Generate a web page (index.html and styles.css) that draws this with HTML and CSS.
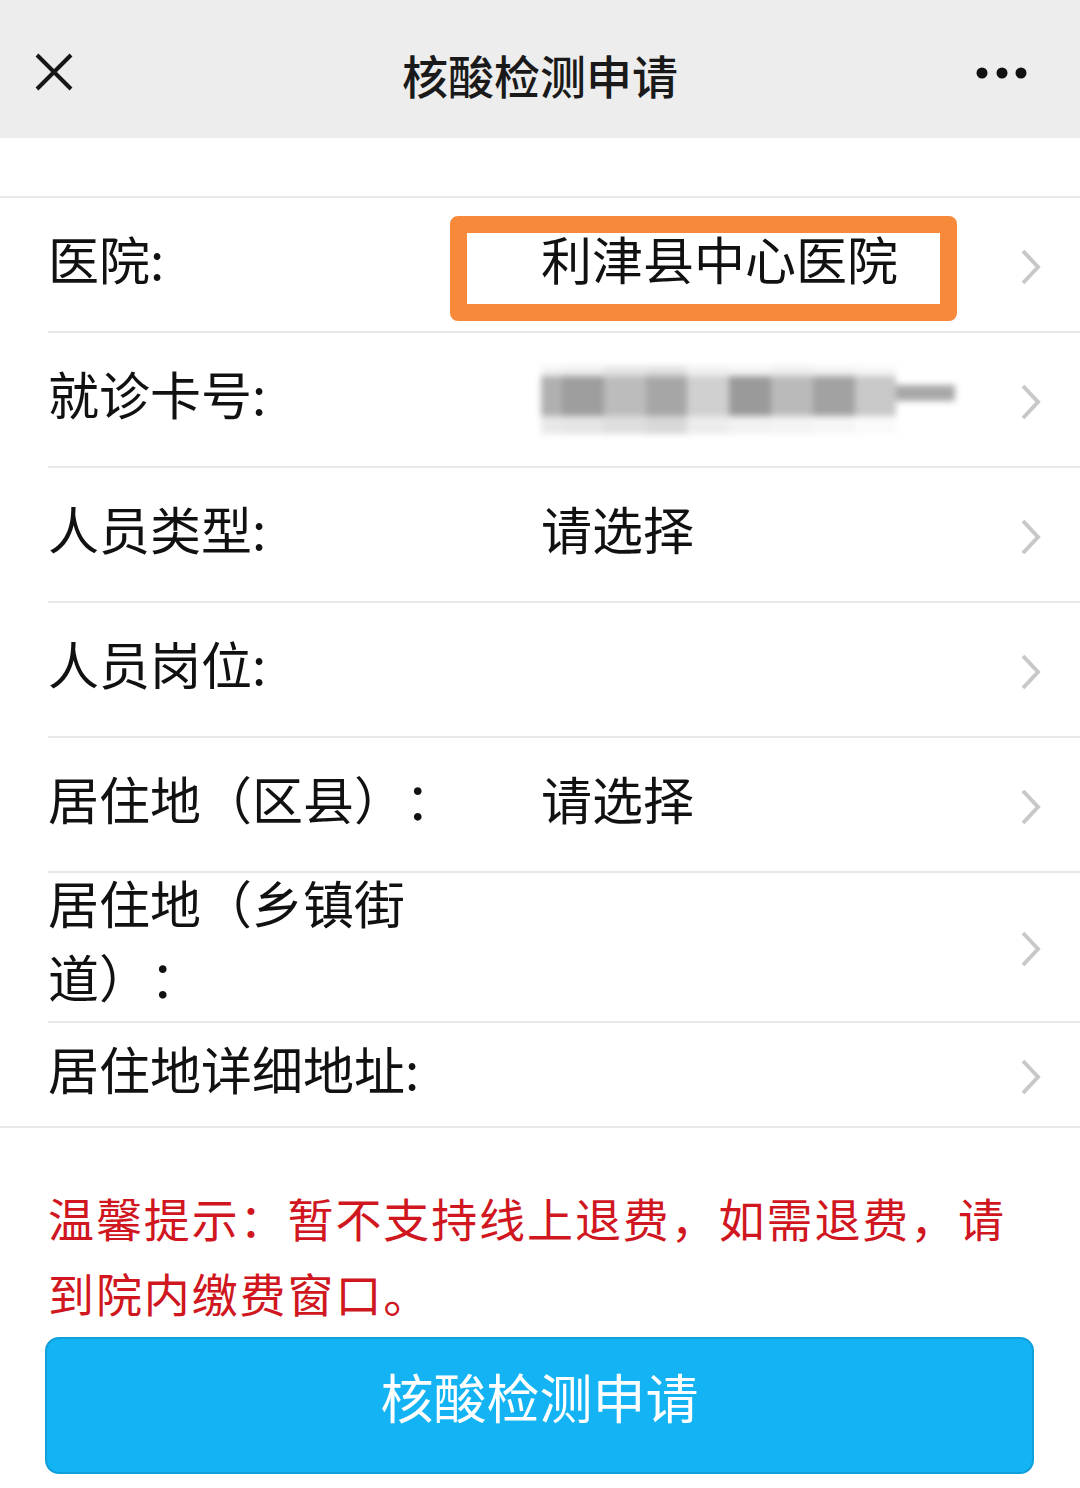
FILE: index.html
```html
<!DOCTYPE html>
<html lang="zh-CN">
<head>
<meta charset="utf-8">
<title>核酸检测申请</title>
<link rel="stylesheet" href="styles.css">
</head>
<body>
<div class="page">
  <header class="topbar">
    <svg class="close" width="40" height="40" viewBox="0 0 40 40"><path d="M3 3 L37 37 M37 3 L3 37" stroke="#161616" stroke-width="4" fill="none"/></svg>
    <div class="title">核酸检测申请</div>
    <svg class="more" width="52" height="14" viewBox="0 0 52 14"><circle cx="6" cy="7" r="5.5" fill="#111"/><circle cx="26" cy="7" r="5.5" fill="#111"/><circle cx="45" cy="7" r="5.5" fill="#111"/></svg>
  </header>
  <div class="spacer"></div>
  <div class="form">
    <div class="row">
      <div class="label">医院:</div>
      <div class="value">利津县中心医院</div>
      <svg class="chev" width="22" height="38" viewBox="0 0 22 38"><path d="M3 3 L18 19 L3 35" stroke="#c8c8c8" stroke-width="4" fill="none"/></svg>
      <span class="mark"></span>
    </div>
    <div class="row">
      <div class="label">就诊卡号:</div>
      <div class="value">
        <div class="mosaic">
          <span class="m m1"></span><span class="m m2"></span><span class="m m3"></span><span class="m m4"></span><span class="m m5"></span><span class="m m6"></span><span class="m m7"></span><span class="m m8"></span><span class="m m9"></span><span class="m m10"></span>
        </div>
      </div>
      <svg class="chev" width="22" height="38" viewBox="0 0 22 38"><path d="M3 3 L18 19 L3 35" stroke="#c8c8c8" stroke-width="4" fill="none"/></svg>
    </div>
    <div class="row">
      <div class="label">人员类型:</div>
      <div class="value">请选择</div>
      <svg class="chev" width="22" height="38" viewBox="0 0 22 38"><path d="M3 3 L18 19 L3 35" stroke="#c8c8c8" stroke-width="4" fill="none"/></svg>
    </div>
    <div class="row">
      <div class="label">人员岗位:</div>
      <div class="value"></div>
      <svg class="chev" width="22" height="38" viewBox="0 0 22 38"><path d="M3 3 L18 19 L3 35" stroke="#c8c8c8" stroke-width="4" fill="none"/></svg>
    </div>
    <div class="row">
      <div class="label">居住地（区县）：</div>
      <div class="value">请选择</div>
      <svg class="chev" width="22" height="38" viewBox="0 0 22 38"><path d="M3 3 L18 19 L3 35" stroke="#c8c8c8" stroke-width="4" fill="none"/></svg>
    </div>
    <div class="row tall">
      <div class="label">居住地（乡镇街道）：</div>
      <div class="value"></div>
      <svg class="chev" width="22" height="38" viewBox="0 0 22 38"><path d="M3 3 L18 19 L3 35" stroke="#c8c8c8" stroke-width="4" fill="none"/></svg>
    </div>
    <div class="row short">
      <div class="label">居住地详细地址:</div>
      <div class="value"></div>
      <svg class="chev" width="22" height="38" viewBox="0 0 22 38"><path d="M3 3 L18 19 L3 35" stroke="#c8c8c8" stroke-width="4" fill="none"/></svg>
    </div>
  </div>
  <p class="tip">温馨提示：暂不支持线上退费，如需退费，请到院内缴费窗口。</p>
  <div class="btnwrap"><button class="submit">核酸检测申请</button></div>
</div>
</body>
</html>
```
FILE: styles.css
```css
html, body {
  margin: 0;
  padding: 0;
  background: #ffffff;
}
body {
  width: 1080px;
  height: 1488px;
  overflow: hidden;
  font-family: "Noto Sans CJK SC", "Noto Sans", sans-serif;
  color: #111;
  text-spacing-trim: space-all;
}
.page {
  display: flex;
  flex-direction: column;
}
.topbar {
  height: 138px;
  background: #ededed;
  display: flex;
  align-items: center;
  justify-content: space-between;
  padding: 0 52px 0 34px;
  position: relative;
}
.close {
  margin-top: 6px;
}
.title {
  position: absolute;
  left: 0;
  right: 0;
  top: 44px;
  text-align: center;
  font-size: 46px;
  line-height: 60px;
  font-weight: 500;
  color: #1a1a1a;
}
.more {
  margin-top: 8px;
}
.spacer {
  height: 58px;
  background: #fff;
  border-bottom: 2px solid #e8e8e8;
}
.form {
  display: flex;
  flex-direction: column;
  border-bottom: 2px solid #e8e8e8;
}
.row {
  position: relative;
  height: 133px;
  margin-left: 48px;
  display: flex;
  align-items: center;
  border-bottom: 2px solid #e8e8e8;
  font-size: 51px;
  line-height: 74px;
}
.row.tall {
  height: 148px;
}
.row.short {
  height: 103px;
  border-bottom: none;
}
.label {
  width: 448px;
  flex: none;
  color: #111;
  padding-bottom: 14px;
}
.row.tall .label {
  padding-bottom: 16px;
}
.value {
  flex: 1;
  margin-left: 45px;
  padding-bottom: 14px;
  color: #111;
}
.mark {
  position: absolute;
  left: 402px;
  top: 18px;
  width: 507px;
  height: 105px;
  border: 17px solid #f7893b;
  border-radius: 8px;
  box-sizing: border-box;
}
.chev {
  flex: none;
  margin-right: 38px;
  margin-top: 4px;
}
.mosaic {
  display: flex;
  height: 68px;
  width: 414px;
  margin-top: 14px;
  filter: blur(3px);
}
.m { flex: 1; height: 100%; }
.m1 { background: linear-gradient(#f2f2f2 0 14%, #b0b0b0 14% 74%, #e8e8e8 74%); flex: 0.5; }
.m2 { background: linear-gradient(#eeeeee 0 14%, #9e9e9e 14% 74%, #e5e5e5 74%); }
.m3 { background: linear-gradient(#e4e4e4 0 14%, #bcbcbc 14% 74%, #dedede 74%); }
.m4 { background: linear-gradient(#e0e0e0 0 14%, #a6a6a6 14% 74%, #d8d8d8 74%); }
.m5 { background: linear-gradient(#f0f0f0 0 14%, #d0d0d0 14% 74%, #ececec 74%); }
.m6 { background: linear-gradient(#f4f4f4 0 14%, #9a9a9a 14% 74%, #f2f2f2 74%); }
.m7 { background: linear-gradient(#eeeeee 0 14%, #bababa 14% 74%, #f4f4f4 74%); }
.m8 { background: linear-gradient(#f2f2f2 0 14%, #a2a2a2 14% 74%, #f6f6f6 74%); }
.m9 { background: linear-gradient(#f6f6f6 0 14%, #c8c8c8 14% 74%, #fafafa 74%); }
.m10 { background: linear-gradient(#ffffff 0 28%, #a8a8a8 28% 52%, #ffffff 52%); flex: 1.4; }
.tip {
  margin: 52px 60px 0 48px;
  font-size: 46px;
  line-height: 75px;
  color: #d0161e;
  letter-spacing: 1.9px;
}
.btnwrap {
  padding: 7px 46px 0 45px;
}
.submit {
  width: 100%;
  height: 137px;
  border: 2px solid #0f9fd9;
  border-radius: 14px;
  background: #14b4f4;
  color: #ffffff;
  font-family: "Noto Sans CJK SC", "Noto Sans", sans-serif;
  font-size: 53px;
  line-height: 64px;
  padding: 0 0 20px 0;
  display: block;
  text-spacing-trim: space-all;
}
```
